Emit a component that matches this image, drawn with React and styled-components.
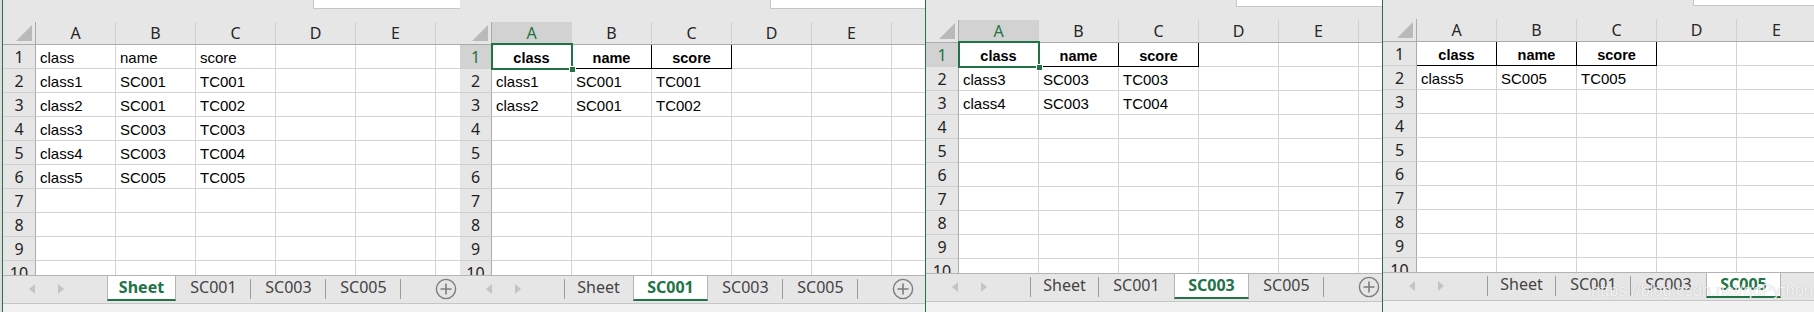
import React from "react";
import styled, { createGlobalStyle } from "styled-components";

// --- global ---
const GlobalStyle = createGlobalStyle`
  html, body {
    margin: 0;
    padding: 0;
    background: #ffffff;
  }
  body {
    width: 1814px;
    height: 312px;
    overflow: hidden;
  }
`;

const GREEN = "#217346";
const CELL_FONT = `"Liberation Sans", Arial, sans-serif`;
const UI_FONT = `"Noto Sans", "Open Sans", sans-serif`;

const Screen = styled.div`
  display: flex;
  width: 1814px;
  height: 312px;
  overflow: hidden;
`;

// 2px sliver left of the first window
const Sliver = styled.div`
  flex: 0 0 2px;
  background: #dcdcdc;
`;

const Window = styled.section`
  position: relative;
  flex: 0 0 ${(p) => p.$width}px;
  width: ${(p) => p.$width}px;
  height: 312px;
  box-sizing: border-box;
  display: flex;
  flex-direction: column;
  overflow: hidden;
  border-left: ${(p) => (p.$edgeLeft ? `1px solid ${GREEN}` : "none")};
  border-right: ${(p) => (p.$edgeRight ? `1px solid ${GREEN}` : "none")};
`;

// --- formula bar strip ---
const TopStrip = styled.div`
  flex: 0 0 ${(p) => p.$height}px;
  display: flex;
  align-items: flex-start;
  background: #e6e6e6;
`;

const FormulaBox = styled.div`
  margin-left: 310px;
  flex: 1;
  height: ${(p) => p.$height}px;
  box-sizing: border-box;
  background: #ffffff;
  border-left: 1px solid #c6c6c6;
  border-bottom: 1px solid #c6c6c6;
`;

// --- column header ---
const HeaderRow = styled.div`
  flex: 0 0 23px;
  display: flex;
  box-sizing: border-box;
  background: #e6e6e6;
  border-bottom: 1px solid #ababab;
`;

const Corner = styled.div`
  position: relative;
  flex: 0 0 ${(p) => p.$width}px;
  box-sizing: border-box;
  border-right: 1px solid #ababab;

  &::after {
    content: "";
    position: absolute;
    right: 3px;
    bottom: 3px;
    width: 0;
    height: 0;
    border-left: 16px solid transparent;
    border-bottom: 16px solid #b9b9b9;
  }
`;

const ColHead = styled.div`
  flex: 0 0 80px;
  box-sizing: border-box;
  display: flex;
  align-items: center;
  justify-content: center;
  border-right: 1px solid #d0d0d0;
  background: ${(p) => (p.$active ? "#d2d2d2" : "transparent")};
  color: ${(p) => (p.$active ? GREEN : "#262626")};
  font-family: ${UI_FONT};
  font-size: 16px;
`;

// --- grid body ---
const Body = styled.div`
  flex: 0 0 232px;
  margin-top: -2px;
  padding-top: 2px;
  box-sizing: border-box;
  overflow: hidden;
`;

const Row = styled.div`
  display: flex;
  height: 24px;
`;

const RowHead = styled.div`
  flex: 0 0 ${(p) => p.$width}px;
  box-sizing: border-box;
  display: flex;
  align-items: center;
  justify-content: center;
  background: ${(p) => (p.$active ? "#d2d2d2" : "#e6e6e6")};
  color: ${(p) => (p.$active ? GREEN : "#1f1f1f")};
  border-right: 1px solid #ababab;
  border-bottom: 1px solid #d0d0d0;
  font-family: ${UI_FONT};
  font-size: 16px;
  padding-top: 1px;
`;

const Cell = styled.div`
  position: relative;
  flex: 0 0 80px;
  box-sizing: border-box;
  display: flex;
  align-items: center;
  justify-content: ${(p) => (p.$bold ? "center" : "flex-start")};
  padding: 2px 4px 0;
  background: #ffffff;
  border-right: 1px solid ${(p) => (p.$boxed ? "#000000" : "#d4d4d4")};
  border-bottom: 1px solid ${(p) => (p.$boxed ? "#000000" : "#d4d4d4")};
  font-family: ${CELL_FONT};
  font-size: ${(p) => (p.$bold ? "14.5px" : "15px")};
  font-weight: ${(p) => (p.$bold ? 700 : 400)};
  color: #000000;
  white-space: nowrap;
`;

const Selection = styled.div`
  position: absolute;
  top: -2px;
  left: -1px;
  width: 82px;
  height: 27px;
  box-sizing: border-box;
  border: 2px solid ${GREEN};
  z-index: 2;

  &::after {
    content: "";
    position: absolute;
    right: -5px;
    bottom: -5px;
    width: 5px;
    height: 5px;
    background: ${GREEN};
    border: 1px solid #ffffff;
  }
`;

// --- sheet tabs ---
const TabBar = styled.div`
  position: relative;
  z-index: 3;
  flex: 0 0 29px;
  box-sizing: border-box;
  display: flex;
  align-items: stretch;
  background: #e6e6e6;
  border-top: 1px solid #b4b4b4;
  border-bottom: 1px solid #c6c6c6;
`;

const Nav = styled.div`
  flex: 0 0 104px;
  display: flex;
  align-items: center;
  gap: 23px;
  padding-left: 26px;
  box-sizing: border-box;
  padding-bottom: 2px;
`;

const Arrow = styled.span`
  width: 0;
  height: 0;
  border-top: 5px solid transparent;
  border-bottom: 5px solid transparent;
  ${(p) =>
    p.$dir === "left"
      ? "border-right: 6px solid #c4c4c4;"
      : "border-left: 6px solid #c4c4c4;"}
`;

const Tabs = styled.div`
  display: flex;
  align-items: flex-start;
  position: relative;
`;

const Tab = styled.div`
  position: relative;
  flex: 0 0 ${(p) => p.$width}px;
  height: 25px;
  box-sizing: border-box;
  display: flex;
  align-items: center;
  justify-content: center;
  padding-bottom: 2px;
  font-family: ${UI_FONT};
  font-size: 16px;
  font-weight: ${(p) => (p.$active ? 700 : 400)};
  color: ${(p) => (p.$active ? GREEN : "#444444")};
  background: ${(p) => (p.$active ? "#ffffff" : "transparent")};
  border-left: 1px solid ${(p) => (p.$active ? "#b4b4b4" : "transparent")};
  border-right: 1px solid ${(p) => (p.$active ? "#b4b4b4" : "transparent")};
  border-bottom: 2px solid ${(p) => (p.$active ? GREEN : "transparent")};

  &::before {
    content: "";
    display: ${(p) => (p.$sepLeft ? "block" : "none")};
    position: absolute;
    left: -1px;
    top: 3px;
    height: 20px;
    width: 1px;
    background: #9c9c9c;
  }

  &::after {
    content: "";
    display: ${(p) => (p.$sepRight ? "block" : "none")};
    position: absolute;
    right: -1px;
    top: 3px;
    height: 20px;
    width: 1px;
    background: #9c9c9c;
  }
`;

const AddSheet = styled.div`
  margin-left: 34px;
  display: flex;
  align-items: center;
  padding-bottom: 2px;
`;

const StatusBar = styled.div`
  flex: 1;
  background: #f1f1f1;
`;

const Watermark = styled.div`
  position: absolute;
  left: 208px;
  top: 281px;
  z-index: 5;
  font-family: ${CELL_FONT};
  font-size: 16.5px;
  color: rgba(255, 255, 255, 0.85);
  text-shadow: 0 0 1px rgba(0, 0, 0, 0.25);
  white-space: nowrap;
`;

// --- data ---
const COLS = ["A", "B", "C", "D", "E", ""];
const TAB_NAMES = ["Sheet", "SC001", "SC003", "SC005"];
const TAB_WIDTHS = [69, 75, 75, 75];

const windows = [
  {
    width: 458,
    edgeLeft: true,
    top: 22,
    rowHead: 33,
    styled: false,
    active: 0,
    rows: [
      ["class", "name", "score"],
      ["class1", "SC001", "TC001"],
      ["class2", "SC001", "TC002"],
      ["class3", "SC003", "TC003"],
      ["class4", "SC003", "TC004"],
      ["class5", "SC005", "TC005"],
    ],
  },
  {
    width: 465,
    top: 22,
    rowHead: 32,
    styled: true,
    selected: true,
    active: 1,
    rows: [
      ["class", "name", "score"],
      ["class1", "SC001", "TC001"],
      ["class2", "SC001", "TC002"],
    ],
  },
  {
    width: 458,
    edgeLeft: true,
    edgeRight: true,
    top: 20,
    rowHead: 33,
    styled: true,
    selected: true,
    active: 2,
    rows: [
      ["class", "name", "score"],
      ["class3", "SC003", "TC003"],
      ["class4", "SC003", "TC004"],
    ],
  },
  {
    width: 431,
    top: 19,
    rowHead: 34,
    styled: true,
    active: 3,
    watermark: true,
    rows: [
      ["class", "name", "score"],
      ["class5", "SC005", "TC005"],
    ],
  },
];

const PlusIcon = () => (
  <svg width="22" height="22" viewBox="0 0 22 22">
    <circle cx="11" cy="11" r="9.6" fill="none" stroke="#7d7d7d" strokeWidth="1.4" />
    <path d="M11 5.5v11M5.5 11h11" stroke="#7d7d7d" strokeWidth="1.6" />
  </svg>
);

// --- components ---
const SheetWindow = ({ win }) => {
  const rowNums = Array.from({ length: 10 }, (_, i) => i + 1);
  return (
    <Window $width={win.width} $edgeLeft={win.edgeLeft} $edgeRight={win.edgeRight}>
      <TopStrip $height={win.top}>
        <FormulaBox $height={win.top - 13} />
      </TopStrip>

      <HeaderRow>
        <Corner $width={win.rowHead} />
        {COLS.map((c, i) => (
          <ColHead key={i} $active={win.selected && i === 0}>
            {c}
          </ColHead>
        ))}
      </HeaderRow>

      <Body>
        {rowNums.map((n) => {
          const data = win.rows[n - 1] || [];
          const isHead = win.styled && n === 1;
          return (
            <Row key={n}>
              <RowHead $width={win.rowHead} $active={win.selected && n === 1}>
                {n}
              </RowHead>
              {COLS.map((_, ci) => (
                <Cell key={ci} $bold={isHead && ci < 3} $boxed={isHead && ci < 3}>
                  {data[ci] || ""}
                  {win.selected && n === 1 && ci === 0 && <Selection />}
                </Cell>
              ))}
            </Row>
          );
        })}
      </Body>

      <TabBar>
        <Nav>
          <Arrow $dir="left" />
          <Arrow $dir="right" />
        </Nav>
        <Tabs>
          {TAB_NAMES.map((name, i) => {
            const active = i === win.active;
            const nextActive = i + 1 === win.active;
            return (
              <Tab
                key={name}
                $width={TAB_WIDTHS[i]}
                $active={active}
                $sepLeft={i === 0 && !active}
                $sepRight={!active && !nextActive}
              >
                {name}
              </Tab>
            );
          })}
        </Tabs>
        <AddSheet>
          <PlusIcon />
        </AddSheet>
      </TabBar>
      <StatusBar />

      {win.watermark && <Watermark>https://blog.csdn.net/qdPython</Watermark>}
    </Window>
  );
};

const App = () => {
  return (
    <>
      <GlobalStyle />
      <Screen>
        <Sliver />
        {windows.map((w, i) => (
          <SheetWindow key={i} win={w} />
        ))}
      </Screen>
    </>
  );
};

export default App;
